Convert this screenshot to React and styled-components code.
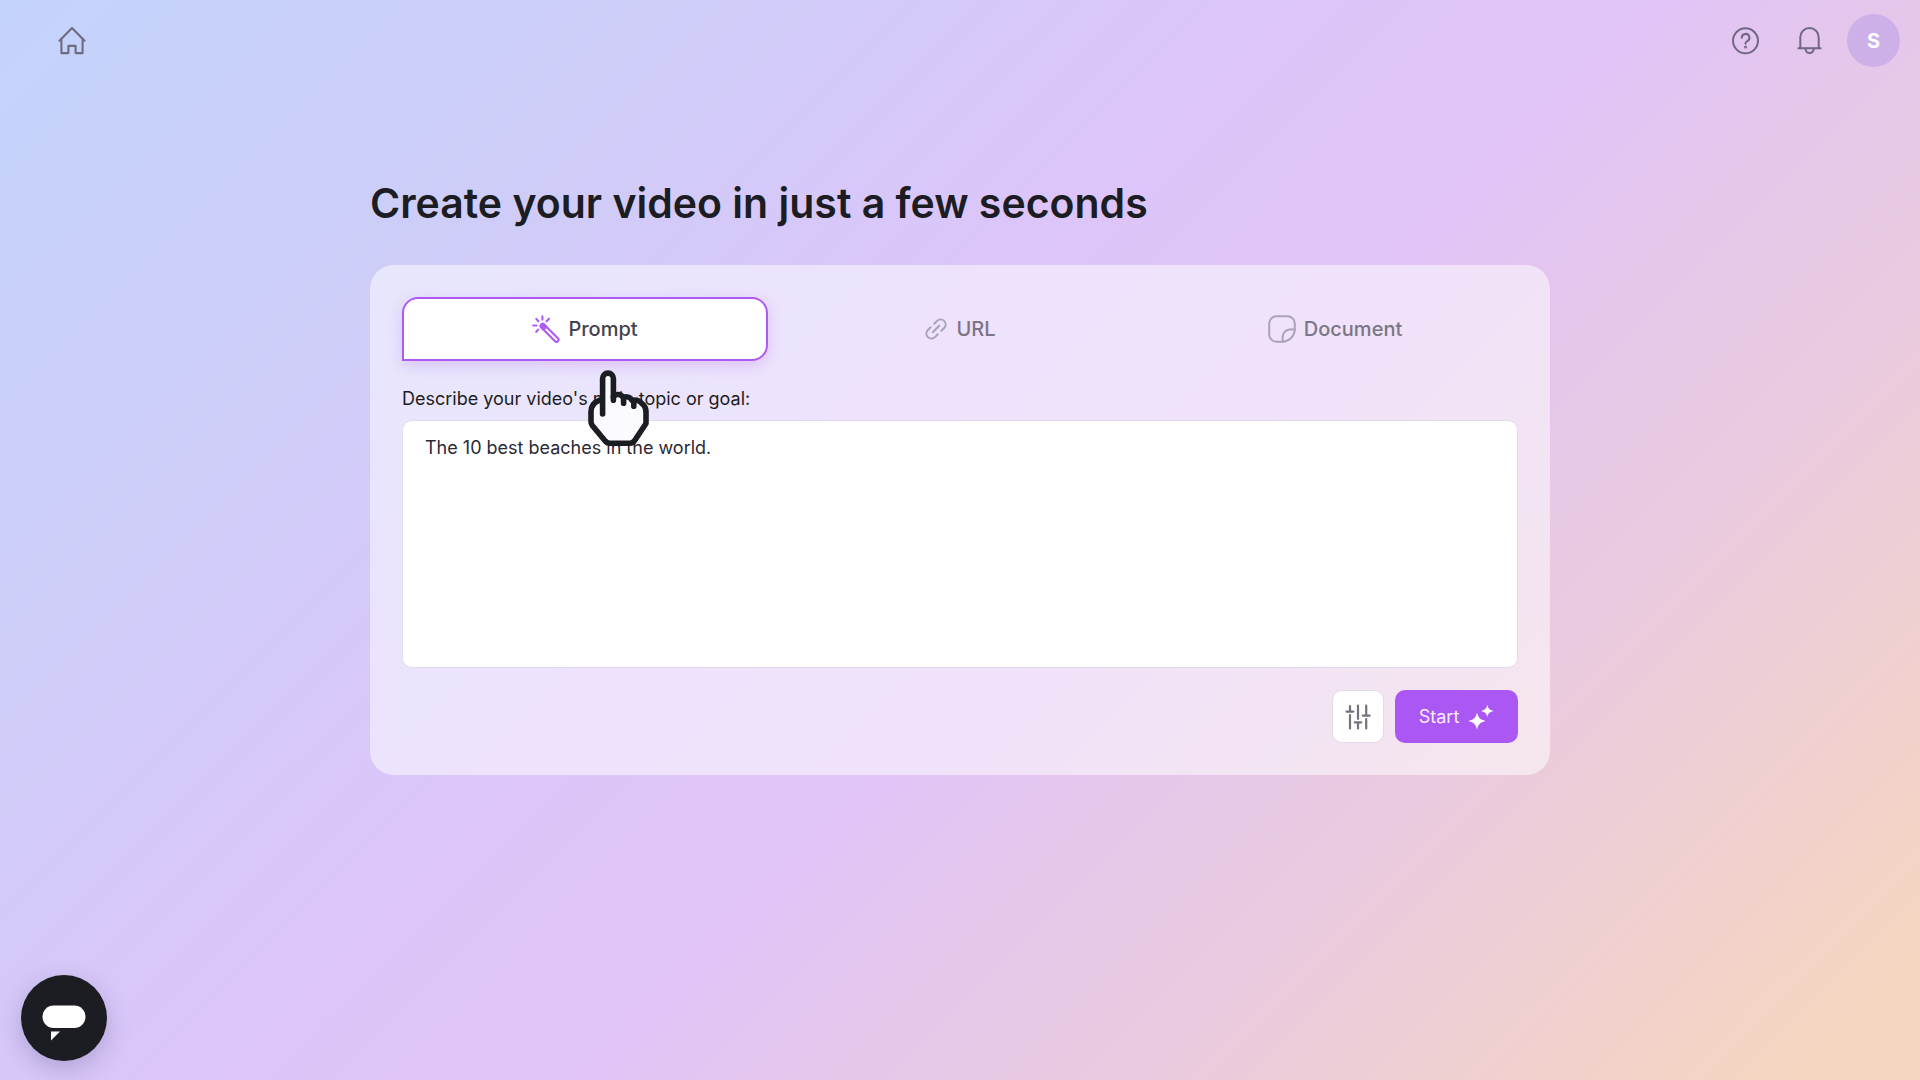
import React, { useState } from "react";
import styled, { createGlobalStyle } from "styled-components";

const GlobalStyle = createGlobalStyle`
  * {
    box-sizing: border-box;
  }
  body {
    margin: 0;
    color: #1c1d22;
    font-family: Inter, "Liberation Sans", sans-serif;
  }
  button, textarea {
    font-family: inherit;
  }
`;

const HomeIcon = () => (
  <svg width="28" height="28" viewBox="0 0 28 28" fill="none" stroke="#6f6b80" strokeWidth="2.1" strokeLinejoin="round" strokeLinecap="round">
    <path d="M1.5 13.7 14 1.1l12.500 12.600" />
    <path d="M3.400 12.100v14h7v-7.200h7.200v7.200h7v-14" />
  </svg>
);

const HelpIcon = () => (
  <svg width="28" height="28" viewBox="0 0 28 28" fill="none" stroke="#6f6880" strokeWidth="2" strokeLinecap="round" strokeLinejoin="round">
    <circle cx="14.500" cy="13.800" r="12.5" />
    <path d="M10.800 10.800a3.800 3.800 0 1 1 5.500 3.300c-1.200.6-1.800 1.200-1.800 2.600" />
    <circle cx="14.500" cy="20" r="0.5" fill="#6f6880" />
  </svg>
);

const BellIcon = () => (
  <svg width="28" height="28" viewBox="0 0 28 28" fill="none" stroke="#6f6880" strokeWidth="2" strokeLinecap="round" strokeLinejoin="round">
    <path d="M5.300 21.200V10.300a9.200 9.200 0 0 1 18.400 0v10.900" />
    <path d="M3.400 21.300h22.200" />
    <path d="M10.500 21.500a4.100 4.600 0 0 0 8.200 0" />
  </svg>
);

const WandIcon = () => (
  <svg width="28" height="28" viewBox="0 0 28 28" fill="none" stroke="#b05af5" strokeWidth="2.1" strokeLinecap="round" strokeLinejoin="round">
    <path d="M9.400 12.600a2 2 0 0 1 2.900-2.900l13.600 13.600a2 2 0 0 1-2.900 2.900z" />
    <path d="M9.300 12.500a2 2 0 0 1 2.900-2.900l2.200 2.200-2.900 2.900z" fill="#b05af5" />
    <path d="M10.400 1.300v3.300M17 3.700l-2.400 2.600M4.300 3.900l2.100 2.400M1.200 10.500h3.300M6.200 14.600l-2 2.200" />
  </svg>
);

const LinkIcon = () => (
  <svg width="24" height="24" viewBox="0 0 24 24" fill="none" stroke="#aaa3b6" strokeWidth="2" strokeLinecap="round" strokeLinejoin="round">
    <g transform="rotate(-45 12 12)">
      <path d="M9.500 17H5.500a5 5 0 0 1 0-10h4" />
      <path d="M14.500 7h4a5 5 0 0 1 0 10h-4" />
      <path d="M7.500 12h9" />
    </g>
  </svg>
);

const NoteIcon = () => (
  <svg width="28" height="28" viewBox="0 0 28 28" fill="none" stroke="#aaa3b6" strokeWidth="2" strokeLinecap="round" strokeLinejoin="round">
    <path d="M8.500 1.200h11a7.300 7.300 0 0 1 7.300 7.300V14c0 7-5.800 12.800-12.800 12.800H8.500a7.300 7.300 0 0 1-7.300-7.300v-11A7.300 7.300 0 0 1 8.500 1.200z" />
    <path d="M26.700 15.200c-1.200-.8-2.900-1.100-5.200-.7-3.800.6-6.200 3-6.800 6.800-.4 2.200-.1 4.100.6 5.400" />
  </svg>
);

const SlidersIcon = () => (
  <svg width="26" height="26" viewBox="0 0 26 26" fill="none" stroke="#75717f" strokeWidth="2.2" strokeLinecap="round">
    <path d="M5 2v5.300M1.500 7.600h6.800M5 11v13.500" />
    <path d="M13 1.500v13.300M9.800 18.400h6.400M13 18.600v5.900" />
    <path d="M21.200 1.500v9.600M17.800 11.600h6.800M21.200 15.200v9.300" />
  </svg>
);

const SparklesIcon = () => (
  <svg width="26" height="26" viewBox="0 0 26 26" fill="#ffffff">
    <path d="M9 8.500c1.300 5.300 2.800 6.700 8.500 8.500-5.700 1.800-7.200 3.200-8.500 8.500-1.300-5.300-2.800-6.700-8.500-8.500 5.700-1.800 7.200-3.200 8.500-8.500z" />
    <path d="M19.300.8c.9 3.900 2 5 6.200 6.200-4.200 1.200-5.300 2.300-6.200 6.200-.9-3.900-2-5-6.200-6.200 4.200-1.200 5.300-2.300 6.200-6.200z" />
  </svg>
);

const ChatIcon = () => (
  <svg width="44" height="36" viewBox="0 0 44 36" fill="#ffffff">
    <rect x="0.5" y="0.5" width="43" height="22.5" rx="11.25" />
    <path d="M9 26.500h9l-9 9z" />
  </svg>
);

const HandPointer = () => (
  <svg width="62" height="78" viewBox="0 0 62 78" fill="#fbfaff" stroke="#1c1d22" strokeWidth="5.6" strokeLinecap="round" strokeLinejoin="round">
    <path d="M14.600 45V9.500a5.400 5.400 0 0 1 10.800 0v18.200c2.600-3.200 7.600-2.800 9.800.7 3.200-1.400 7.200-.2 8.900 3 3.200-.8 7 .1 9 2.300 3.200 2.300 4.900 5.300 4.900 9.300v11.500L46.500 71.800c-1.300 1.700-2.600 2.400-4.600 2.400H21.800c-2 0-3.500-.7-4.800-2.400L4.300 56.500c-.9-1.300-1.300-2.500-1.300-4.200v-9.300c0-5.300 2.700-9.700 8.800-11.800l2.800-1.200z" />
    <path d="M25.400 27.700v3.600M35.600 29v5.300M45.800 32.500v4.800" />
  </svg>
);

const tabs = [
  { id: "prompt", label: "Prompt", Icon: WandIcon },
  { id: "url", label: "URL", Icon: LinkIcon },
  { id: "document", label: "Document", Icon: NoteIcon },
];

const App = () => {
  const [active, setActive] = useState("prompt");
  const [topic, setTopic] = useState("The 10 best beaches in the world.");

  return (
    <Page>
      <GlobalStyle />
      <Header>
        <HomeLink href="#" aria-label="Home">
          <HomeIcon />
        </HomeLink>
        <HeaderActions>
          <IconButton type="button" aria-label="Help">
            <HelpIcon />
          </IconButton>
          <IconButton type="button" aria-label="Notifications">
            <BellIcon />
          </IconButton>
          <Avatar type="button">S</Avatar>
        </HeaderActions>
      </Header>

      <Main>
        <Title>Create your video in just a few seconds</Title>
        <Card>
          <Tabs role="tablist">
            {tabs.map(({ id, label, Icon }) => (
              <Tab
                key={id}
                type="button"
                role="tab"
                aria-selected={active === id}
                $active={active === id}
                onClick={() => setActive(id)}
              >
                <Icon />
                {label}
              </Tab>
            ))}
          </Tabs>
          <Label htmlFor="topic">Describe your video's main topic or goal:</Label>
          <TopicInput
            id="topic"
            spellCheck={false}
            value={topic}
            onChange={(e) => setTopic(e.target.value)}
          />
          <CardActions>
            <SettingsButton type="button" aria-label="Settings">
              <SlidersIcon />
            </SettingsButton>
            <StartButton type="button">
              Start
              <SparklesIcon />
            </StartButton>
          </CardActions>
          <Pointer>
            <HandPointer />
          </Pointer>
        </Card>
      </Main>

      <ChatButton type="button" aria-label="Open chat">
        <ChatIcon />
      </ChatButton>
    </Page>
  );
};

const Page = styled.div`
  min-height: 100vh;
  background: linear-gradient(
    135deg,
    #c4d3fc 0%,
    #cccef8 20%,
    #dcc5f9 42%,
    #e1c4f5 56%,
    #ebcbdc 76%,
    #f5d6c0 96%
  );
`;

const Header = styled.header`
  display: flex;
  align-items: center;
  justify-content: space-between;
  height: 81px;
  padding: 0 20px 0 58px;
`;

const HomeLink = styled.a`
  display: flex;
`;

const HeaderActions = styled.div`
  display: flex;
  align-items: center;
  gap: 24px;
`;

const IconButton = styled.button`
  display: flex;
  align-items: center;
  justify-content: center;
  width: 40px;
  height: 40px;
  padding: 0;
  border: none;
  background: none;
  cursor: pointer;
`;

const Avatar = styled.button`
  width: 53px;
  height: 53px;
  margin-left: -6px;
  padding: 0;
  border: none;
  border-radius: 50%;
  background: #ceb0e8;
  color: #ffffff;
  font-size: 20px;
  font-weight: 700;
  cursor: pointer;
`;

const Main = styled.main`
  width: 100%;
  max-width: 1220px;
  margin: 0 auto;
  padding: 92px 20px 40px;
`;

const Title = styled.h1`
  margin: 0 0 32px;
  font-size: 41px;
  font-weight: 600;
  line-height: 60px;
`;

const Card = styled.section`
  position: relative;
  padding: 32px;
  border-radius: 24px;
  background: rgba(255, 255, 255, 0.5);
`;

const Tabs = styled.div`
  display: grid;
  grid-template-columns: repeat(3, 1fr);
  gap: 9px;
`;

const Tab = styled.button`
  display: flex;
  align-items: center;
  justify-content: center;
  gap: 8px;
  height: 64px;
  border: 2px solid ${({ $active }) => ($active ? "#b05af5" : "transparent")};
  border-radius: 16px 16px 16px 0;
  background: ${({ $active }) => ($active ? "#ffffff" : "none")};
  box-shadow: ${({ $active }) =>
    $active ? "0 4px 14px rgba(176, 90, 245, 0.25)" : "none"};
  color: ${({ $active }) => ($active ? "#45424f" : "#7b7585")};
  font-size: 20px;
  font-weight: 500;
  cursor: pointer;
`;

const Label = styled.label`
  display: block;
  margin: 24px 0 7px;
  font-size: 18px;
  font-weight: 400;
  line-height: 28px;
`;

const TopicInput = styled.textarea`
  display: block;
  width: 100%;
  height: 248px;
  padding: 14px 22px;
  border: 1px solid #e2dcea;
  border-radius: 10px;
  outline: none;
  resize: none;
  background: #ffffff;
  color: #2c2936;
  font-size: 18px;
  font-weight: 400;
  line-height: 26px;
`;

const CardActions = styled.div`
  display: flex;
  justify-content: flex-end;
  gap: 11px;
  margin-top: 22px;
`;

const SettingsButton = styled.button`
  display: flex;
  align-items: center;
  justify-content: center;
  width: 52px;
  height: 53px;
  padding: 0;
  border: 1px solid #e2dcea;
  border-radius: 10px;
  background: #ffffff;
  cursor: pointer;
`;

const StartButton = styled.button`
  display: flex;
  align-items: center;
  justify-content: center;
  gap: 9px;
  width: 123px;
  height: 53px;
  padding: 0;
  border: none;
  border-radius: 10px;
  background: #ab57f3;
  color: #f7ecff;
  font-size: 18px;
  font-weight: 400;
  cursor: pointer;
`;

const Pointer = styled.div`
  position: absolute;
  top: 104px;
  left: 218px;
  pointer-events: none;
`;

const ChatButton = styled.button`
  position: fixed;
  left: 21px;
  bottom: 19px;
  display: flex;
  align-items: center;
  justify-content: center;
  width: 86px;
  height: 86px;
  padding: 10px 0 0;
  border: none;
  border-radius: 50%;
  background: #1c1d22;
  box-shadow: 0 8px 24px rgba(60, 60, 110, 0.25);
  cursor: pointer;
`;

export default App;
